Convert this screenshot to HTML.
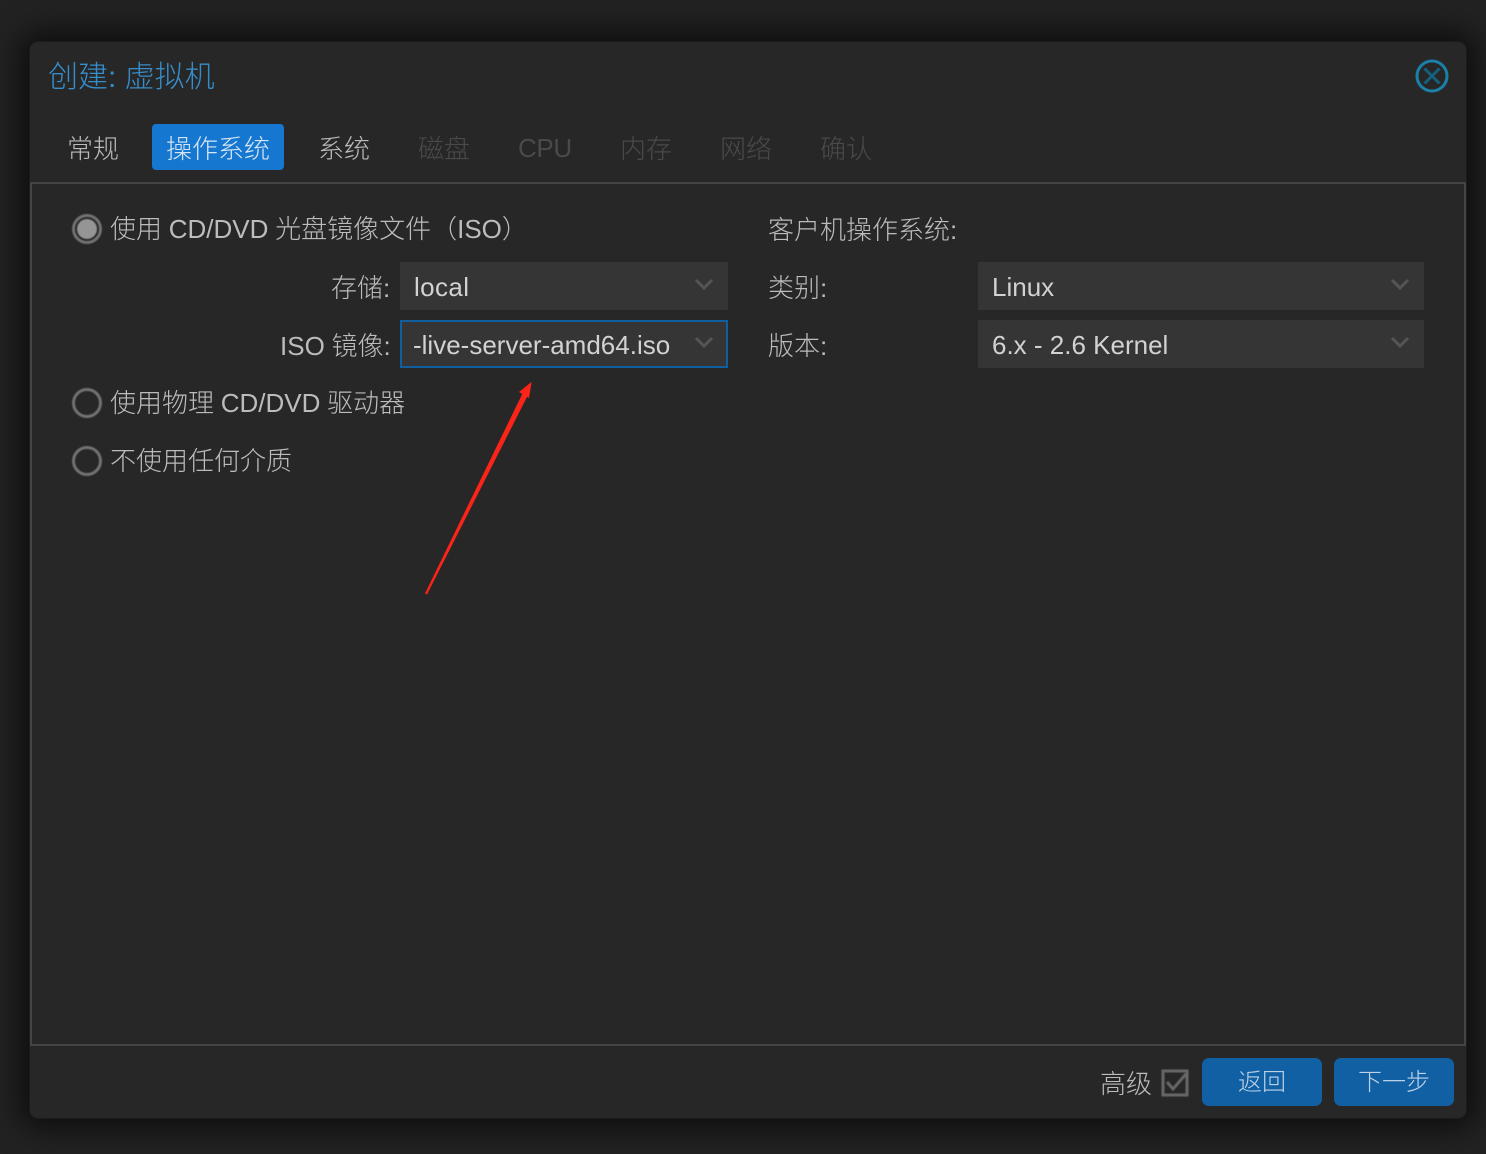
<!DOCTYPE html>
<html lang="zh"><head><meta charset="utf-8"><title>创建: 虚拟机</title>
<style>
html,body{margin:0;padding:0;width:1486px;height:1154px;overflow:hidden;background:#222}
body{position:relative;font-family:"Liberation Sans","Noto Sans CJK SC",sans-serif;font-weight:300;font-size:26px;color:#bcbcbc;word-spacing:-.5px}
.a,.t{position:absolute}
.t{white-space:nowrap;line-height:36px;height:36px}
.win{position:absolute;left:30px;top:42px;width:1436px;height:1076px;background:#272727;border-radius:8px;box-shadow:0 0 0 1px #1c1c1c,0 0 30px 10px rgba(0,0,0,.62)}
.body{position:absolute;left:30px;top:182px;width:1432px;height:860px;border:2px solid #444;background:#272727;box-sizing:content-box}
.sel{position:absolute;height:48px;background:#353535;word-spacing:0}
.sel svg{position:absolute;top:16px}
.sel .v{position:absolute;left:14px;top:7px;line-height:36px;white-space:nowrap;color:#d2d2d2}
.radio{position:absolute;left:72px;width:24px;height:24px;border:3px solid #727272;border-radius:50%;background:#272727;filter:blur(.5px)}
.dis{color:#4a4a4a}
.btn{position:absolute;top:1058px;width:120px;height:48px;background:#1160a4;border-radius:7px;color:#bdd4e8;text-align:center;line-height:48px;font-size:24px}
.btn span{position:relative;top:1px}
</style></head><body>
<div class="win"></div>
<div class="t" style="left:48px;top:59px;font-size:30px;line-height:38px;height:38px;color:#378dc9;word-spacing:0">创建: 虚拟机</div>
<svg class="a" style="left:1414px;top:58px" width="36" height="36" viewBox="0 0 36 36"><circle cx="18" cy="18" r="15" fill="#272727" stroke="#1c7fa8" stroke-width="3"/><path d="M10.500 10.500L25.500 25.500M25.500 10.500L10.500 25.500" stroke="#14607f" stroke-width="3" fill="none"/></svg>

<div class="t" style="left:67px;top:131px">常规</div>
<div class="a" style="left:152px;top:124px;width:132px;height:46px;background:#1577d0;border-radius:4px"></div>
<div class="t" style="left:166px;top:131px;color:#d6e5f3">操作系统</div>
<div class="t" style="left:318px;top:131px">系统</div>
<div class="t dis" style="left:418px;top:131px">磁盘</div>
<div class="t dis" style="left:518px;top:130px;letter-spacing:-.4px">CPU</div>
<div class="t dis" style="left:620px;top:131px">内存</div>
<div class="t dis" style="left:720px;top:131px">网络</div>
<div class="t dis" style="left:820px;top:131px">确认</div>

<div class="body"></div>

<div class="radio" style="top:214px"></div>
<div class="a" style="left:77px;top:219px;width:20px;height:20px;border-radius:50%;background:#959595;filter:blur(.5px)"></div>
<div class="t" style="left:110px;top:211px">使用 CD/DVD 光盘镜像文件（ISO）</div>
<div class="t" style="left:331px;top:270px">存储:</div>
<div class="sel" style="left:400px;top:262px;width:328px"><div class="v" style="letter-spacing:.4px">local</div><svg style="left:294px" width="20" height="14" viewBox="0 0 20 14"><path d="M2 2L10 10L18 2" fill="none" stroke="#555" stroke-width="3"/></svg></div>
<div class="t" style="left:280px;top:328px">ISO 镜像:</div>
<div class="sel" style="left:400px;top:320px;width:324px;height:44px;border:2px solid #125f9f"><div class="v" style="left:11px;top:5px">-live-server-amd64.iso</div><svg style="left:292px;top:14px" width="20" height="14" viewBox="0 0 20 14"><path d="M2 2L10 10L18 2" fill="none" stroke="#555" stroke-width="3"/></svg></div>
<div class="radio" style="top:388px"></div>
<div class="t" style="left:110px;top:385px">使用物理 CD/DVD 驱动器</div>
<div class="radio" style="top:446px"></div>
<div class="t" style="left:110px;top:443px">不使用任何介质</div>

<div class="t" style="left:768px;top:212px">客户机操作系统:</div>
<div class="t" style="left:768px;top:270px">类别:</div>
<div class="sel" style="left:978px;top:262px;width:446px"><div class="v">Linux</div><svg style="left:412px" width="20" height="14" viewBox="0 0 20 14"><path d="M2 2L10 10L18 2" fill="none" stroke="#555" stroke-width="3"/></svg></div>
<div class="t" style="left:768px;top:328px">版本:</div>
<div class="sel" style="left:978px;top:320px;width:446px"><div class="v">6.x - 2.6 Kernel</div><svg style="left:412px" width="20" height="14" viewBox="0 0 20 14"><path d="M2 2L10 10L18 2" fill="none" stroke="#555" stroke-width="3"/></svg></div>

<svg class="a" style="left:420px;top:375px" width="120" height="225" viewBox="0 0 120 225"><path d="M5 218.500L7 219.500L107.500 21L102.500 18.500Z" fill="#fb2418"/><path d="M111.700 6.700L109 23L99 17Z" fill="#fb2418"/></svg>

<div class="t" style="left:1100px;top:1066px">高级</div>
<svg class="a" style="left:1161px;top:1069px;filter:blur(.4px)" width="28" height="28" viewBox="0 0 28 28"><rect x="2" y="2" width="24" height="24" fill="none" stroke="#686868" stroke-width="3"/><path d="M6 13L12 20L25 5" fill="none" stroke="#686868" stroke-width="3"/></svg>
<div class="btn" style="left:1202px"><span>返回</span></div>
<div class="btn" style="left:1334px"><span>下一步</span></div>
</body></html>
